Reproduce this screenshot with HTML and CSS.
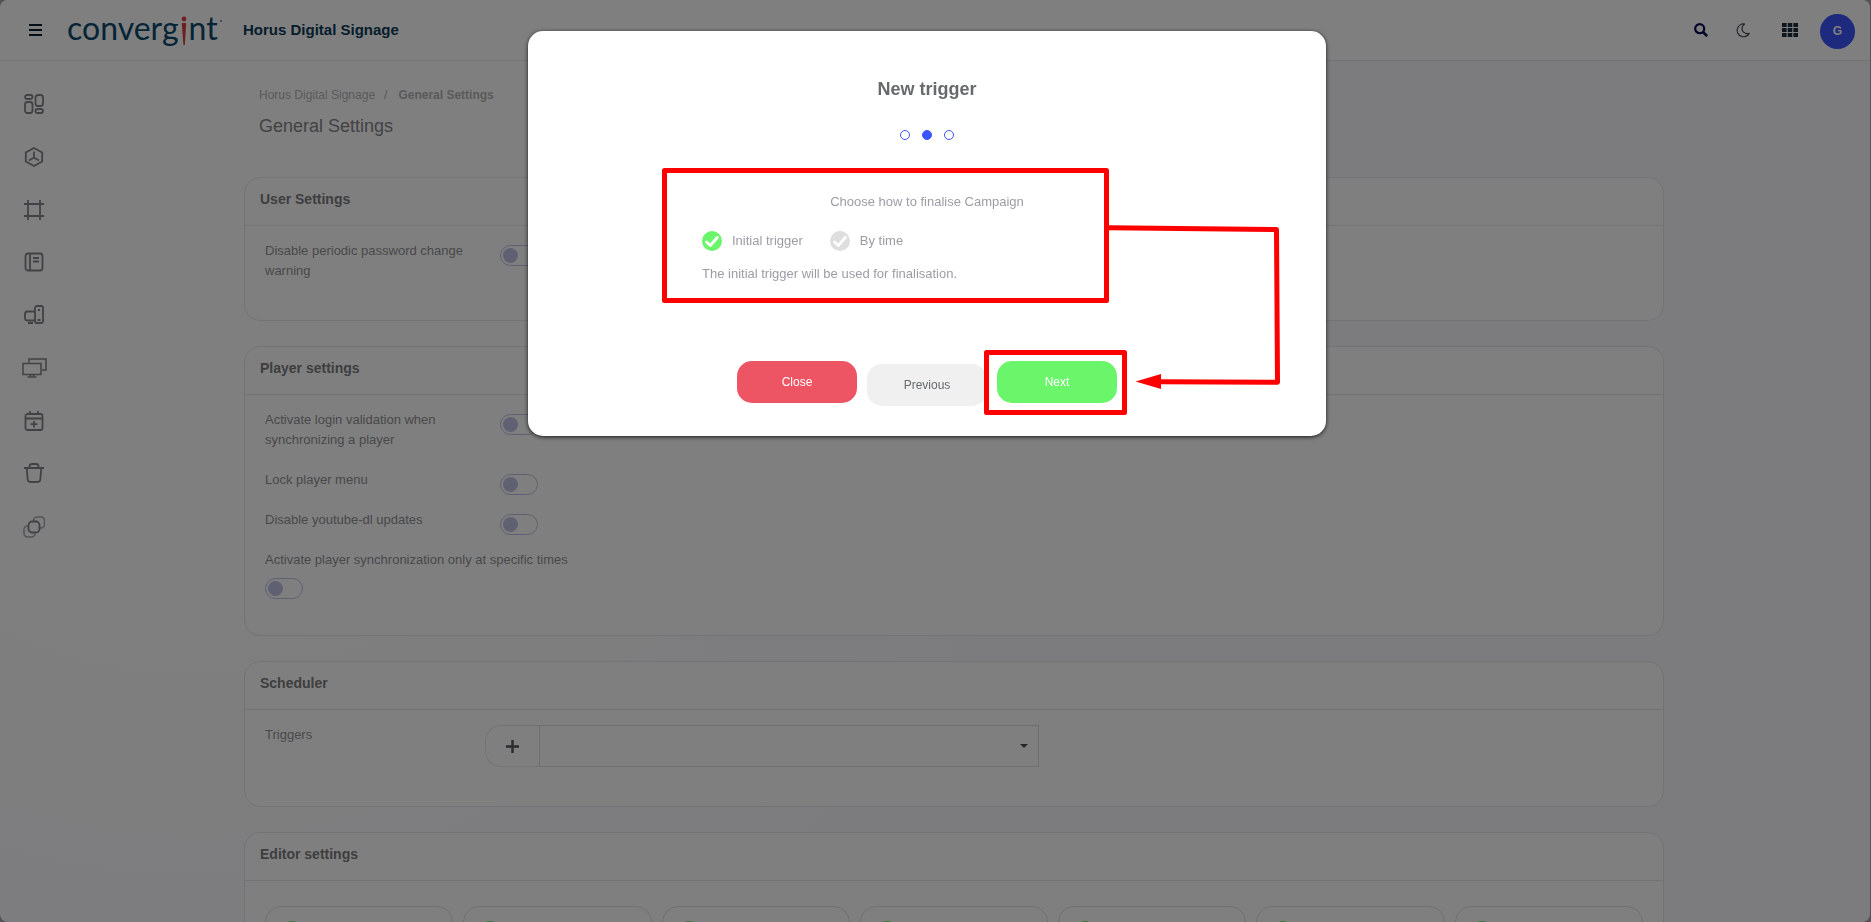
FILE: index.html
```html
<!DOCTYPE html>
<html lang="en">
<head>
<meta charset="utf-8">
<title>General Settings</title>
<link rel="stylesheet" href="styles.css">
</head>
<body>
<div class="app">
  <header class="topbar">
    <button class="icon-btn menu-btn" aria-label="Menu"><svg width="13" height="12" viewBox="0 0 13 12"><path d="M0 1h13M0 6h13M0 11h13" stroke="#0c1c2c" stroke-width="2"/></svg></button>
    <a class="brand" href="#"><span>converg</span><svg class="brand-i" width="6" height="30" viewBox="0 0 6 30"><circle cx="3" cy="3" r="2.4" fill="#e0403c"/><path d="M.8 7h4.400L3.800 29H2.400z" fill="#d93f3c"/></svg><span>nt</span><i class="brand-mark"></i></a>
    <span class="app-name">Horus Digital Signage</span>
    <div class="tools">
      <button class="icon-btn" aria-label="Search"><svg width="14" height="14" viewBox="0 0 14 14" fill="none" stroke="#080850"><circle cx="5.700" cy="5.700" r="4.500" stroke-width="2.200"/><path d="M9 9l4.200 4.200" stroke-width="2.600"/></svg></button>
      <button class="icon-btn" aria-label="Dark mode"><svg width="14" height="15" viewBox="0 0 14 15" fill="none" stroke="#45464e" stroke-width="1.200" stroke-linejoin="round"><path d="M8.600 1A6.400 6.400 0 1 0 13.200 10.400C9 11.400 5.400 8.600 6.100 4.600 6.400 3 7.300 1.800 8.600 1z"/></svg></button>
      <button class="icon-btn" aria-label="Apps"><svg width="16" height="14" viewBox="0 0 16 14" fill="#1b2c3a"><path d="M0 0h4.600v4H0zM5.700 0h4.600v4H5.700zM11.400 0H16v4h-4.600zM0 5h4.600v4H0zM5.700 5h4.600v4H5.700zM11.400 5H16v4h-4.600zM0 10h4.600v4H0zM5.700 10h4.600v4H5.700zM11.400 10H16v4h-4.600z"/></svg></button>
      <button class="avatar">G</button>
    </div>
  </header>

  <div class="layout">
    <nav class="sidebar" aria-label="Main">
      <a href="#" aria-label="Dashboard"><svg viewBox="0 0 20 20"><rect x="1" y="1" width="7.500" height="4" rx="2"/><rect x="1" y="8" width="7.500" height="11" rx="2.500"/><rect x="11.500" y="1" width="7.500" height="11" rx="2.500"/><rect x="11.500" y="15" width="7.500" height="4" rx="2"/></svg></a>
      <a href="#" aria-label="Packages"><svg viewBox="0 0 20 20"><path d="M10 1l8.200 4.500v9L10 19l-8.200-4.500v-9zM10 4.500V10.500M10 10.500l5 3M10 10.500l-5 3"/></svg></a>
      <a href="#" aria-label="Frames"><svg viewBox="0 0 20 20"><path d="M4 0v20M16 0v20M0 4h20M0 16h20"/></svg></a>
      <a href="#" aria-label="Library"><svg viewBox="0 0 20 20"><rect x="1.500" y="1.500" width="17" height="17" rx="2.500"/><path d="M6 1.500v17M9 6h6M9 9.500h6"/></svg></a>
      <a href="#" aria-label="Devices"><svg viewBox="0 0 20 20"><rect x="11" y="1" width="8" height="17" rx="2"/><path d="M11 6.500H3.500Q1 6.500 1 9v4q0 2.500 2.500 2.500H11M4 18h5M14 5h2M13.500 15h3"/></svg></a>
      <a href="#" aria-label="Screens"><svg class="wide" viewBox="0 0 25 20"><path d="M1 5.500h18v11H1zM7 4.500V1h17v11h-4M5.500 19h9M8.500 17v2M11.500 17v2"/></svg></a>
      <a href="#" aria-label="Calendar"><svg viewBox="0 0 20 20"><rect x="1.500" y="3" width="17" height="16" rx="2"/><path d="M1.500 7.500h17M6 0v3M14 0v3M10 10v6.500M6.500 13.200h7"/></svg></a>
      <a href="#" aria-label="Trash"><svg viewBox="0 0 20 20"><path d="M0 5h20M2.700 5l1 11.500Q4 19 6.500 19h7q2.500 0 2.800-2.500L17.300 5M5.500 5V3.500Q5.500 1 8 1h4q2.500 0 2.500 2.500V5"/></svg></a>
      <a href="#" aria-label="Layers"><svg class="stack" viewBox="0 0 22 22"><rect class="faint" x="1" y="10" width="11" height="11" rx="3.500"/><rect class="faint" x="10.500" y="1" width="11" height="11" rx="3.500"/><rect class="front" x="5.500" y="5.500" width="11" height="11" rx="3.500"/></svg></a>
    </nav>

    <main class="content">
      <div class="crumbs"><a href="#">Horus Digital Signage</a><span>/</span><b>General Settings</b></div>
      <h1>General Settings</h1>

      <section class="card">
        <h2>User Settings</h2>
        <div class="body">
          <div class="row"><label for="pw">Disable periodic password change warning</label><input class="toggle" type="checkbox" id="pw"></div>
        </div>
      </section>

      <section class="card">
        <h2>Player settings</h2>
        <div class="body">
          <div class="row"><label for="lv">Activate login validation when synchronizing a player</label><input class="toggle" type="checkbox" id="lv"></div>
          <div class="row"><label for="lk">Lock player menu</label><input class="toggle" type="checkbox" id="lk"></div>
          <div class="row"><label for="yt">Disable youtube-dl updates</label><input class="toggle" type="checkbox" id="yt"></div>
          <div class="row stacked"><label for="sy">Activate player synchronization only at specific times</label><input class="toggle" type="checkbox" id="sy"></div>
        </div>
      </section>

      <section class="card">
        <h2>Scheduler</h2>
        <div class="body">
          <div class="field">
            <label for="trg">Triggers</label>
            <button class="add" aria-label="Add trigger"><svg width="13" height="13" viewBox="0 0 13 13"><path d="M6.500 0v13M0 6.500h13" stroke="#55565a" stroke-width="2.400"/></svg></button>
            <div class="picker"><select id="trg"></select><svg class="caret" width="8" height="4" viewBox="0 0 8 4"><path d="M0 0h8L4 4z" fill="#4a4a4e"/></svg></div>
          </div>
        </div>
      </section>

      <section class="card">
        <h2>Editor settings</h2>
        <div class="tiles">
          <div class="tile"><input class="check" type="checkbox" checked aria-label="Option 1"></div>
          <div class="tile"><input class="check" type="checkbox" checked aria-label="Option 2"></div>
          <div class="tile"><input class="check" type="checkbox" checked aria-label="Option 3"></div>
          <div class="tile"><input class="check" type="checkbox" checked aria-label="Option 4"></div>
          <div class="tile"><input class="check" type="checkbox" checked aria-label="Option 5"></div>
          <div class="tile"><input class="check" type="checkbox" checked aria-label="Option 6"></div>
          <div class="tile"><input class="check" type="checkbox" checked aria-label="Option 7"></div>
        </div>
      </section>
    </main>
  </div>
</div>

<div class="backdrop">
  <div class="modal" role="dialog" aria-labelledby="dlg">
    <h3 id="dlg">New trigger</h3>
    <div class="steps"><i></i><i class="on"></i><i></i></div>
    <p class="prompt">Choose how to finalise Campaign</p>
    <div class="options">
      <div class="choices">
        <label class="choice"><span class="tick"><input type="radio" name="fin" checked><svg viewBox="0 0 20 20"><path d="M4.500 11l3.800 3.500 7-8"/></svg></span>Initial trigger</label>
        <label class="choice"><span class="tick"><input type="radio" name="fin"><svg viewBox="0 0 20 20"><path d="M4.500 11l3.800 3.500 7-8"/></svg></span>By time</label>
      </div>
      <p>The initial trigger will be used for finalisation.</p>
    </div>
    <div class="actions">
      <button class="btn close">Close</button>
      <button class="btn prev">Previous</button>
      <button class="btn next">Next</button>
    </div>
    <svg class="notes" width="798" height="405" viewBox="528 31 798 405" fill="none" stroke="#f00" stroke-width="5" stroke-linejoin="round">
      <rect x="664.500" y="170.500" width="442" height="130"/>
      <rect x="986.500" y="352.500" width="138" height="60"/>
      <path d="M1109 227.800L1276.500 229.600 1277.500 382.300 1160 381.700"/>
      <path d="M1135.500 381.500L1161 374v15z" fill="#f00" stroke="none"/>
    </svg>
  </div>
</div>
</body>
</html>
```
FILE: styles.css
```css
* { box-sizing: border-box; }
body { margin: 0; height: 100vh; overflow: hidden; background: #a8a9b0; font: 13px/20px "Liberation Sans", Arial, sans-serif; color: #929296; }
h1, h2, h3, p { margin: 0; }
a { color: inherit; text-decoration: none; }
button, input, select { font: inherit; margin: 0; }
svg { display: block; }

.app { height: 100vh; margin-right: 1px; border-radius: 8px; overflow: hidden; background: radial-gradient(circle at 200px 200px, #fff 0, #fff 300px, #f9f9fd 900px); }
.topbar { display: flex; align-items: center; height: 61px; padding: 0 15px 0 29px; background: #fff; border-bottom: 1px solid #e4e4ea; }
.icon-btn { padding: 0; border: 0; background: none; }
.brand { display: flex; align-items: center; width: 156px; margin-left: 25px; font: 32px/40px Lato, sans-serif; color: #0b4a6e; }
.brand span { padding-bottom: 4px; }
.brand-i { margin: 1px 2px 0; }
.brand-mark { width: 2px; height: 2px; margin: 0 0 18px 2px; border-radius: 1px; background: #5a86a0; }
.app-name { margin-left: 20px; font-size: 15px; font-weight: bold; color: #0b3a58; }
.tools { display: flex; align-items: center; margin-left: auto; }
.tools .icon-btn { margin-right: 28px; }
.tools .icon-btn:nth-child(2) { margin-right: 32px; }
.tools .icon-btn:nth-child(3) { margin-right: 22px; }
.avatar { width: 35px; height: 35px; margin-top: 2px; padding: 0; border: 0; border-radius: 50%; background: #3a55fb; color: #fff; font-size: 12px; font-weight: bold; }

.layout { display: flex; }
.sidebar { display: flex; flex-direction: column; justify-content: space-between; align-items: center; width: 68px; height: 444px; margin-top: 33px; flex: none; }
.sidebar svg { width: 20px; height: 20px; fill: none; stroke: #848488; stroke-width: 1.8; }
.sidebar .wide { width: 25px; stroke-width: 1.5; }
.sidebar .stack { width: 22px; height: 22px; }
.sidebar .faint { stroke: #a8a8ac; stroke-width: 1.5; }
.sidebar .front { fill: #fff; }

.content { flex: 1; padding: 24px 206px 0 176px; }
.crumbs { display: flex; gap: 9px; padding-left: 15px; font-size: 12px; color: #b4b4b8; }
.crumbs b { margin-left: 2px; }
h1 { margin: 10px 0 40px; padding-left: 15px; font-size: 18px; line-height: 22px; font-weight: normal; color: #85858a; }

.card { margin-bottom: 25px; border: 1px solid #e6e6ec; border-radius: 16px; background: #fff; }
.card h2 { height: 48px; padding: 11px 15px 0; border-bottom: 1px solid #e6e6ec; font-size: 14px; line-height: 20px; color: #7c7c80; }
.body { display: flex; flex-direction: column; gap: 20px; padding: 15px 20px 39px; }
.row { display: flex; align-items: flex-start; height: 20px; }
.row:first-child { height: 40px; }
.row label { width: 210px; margin-right: 25px; }
.row .toggle { margin-top: 4px; }
.stacked { flex-direction: column; height: 46px; }
.stacked label { width: auto; margin: 0; }
.toggle { appearance: none; display: block; width: 38px; height: 21px; padding: 2px; border: 1px solid #bcc0e4; border-radius: 11px; }
.row.stacked .toggle { margin-top: 8px; }
.toggle::before { content: ""; display: block; width: 15px; height: 15px; border-radius: 50%; background: #bfc1e4; }

.field { display: flex; align-items: flex-start; }
.field label { width: 220px; }
.add { display: grid; place-items: center; width: 54px; height: 42px; border: 1px solid #e6e6ec; border-right: 0; border-radius: 16px 0 0 16px; background: none; }
.picker { position: relative; width: 500px; }
.picker select { appearance: none; display: block; width: 100%; height: 42px; border: 1px solid #dedee4; border-radius: 0; background: none; }
.caret { position: absolute; right: 11px; top: 19px; }

.tiles { display: grid; grid-template-columns: repeat(7, 1fr); gap: 10px; padding: 25px 20px; }
.tile { height: 80px; padding: 14px 16px; border: 1px solid #e0e0e6; border-radius: 16px; }
.check { appearance: none; display: block; width: 20px; height: 20px; border-radius: 50%; background: #6af56a; }

.backdrop { position: fixed; inset: 0; display: flex; justify-content: center; align-items: flex-start; padding: 31px 17px 0 0; background: rgba(0, 0, 0, .5); }
.modal { position: relative; width: 798px; padding: 46px 0 30px; border-radius: 15px; background: #fff; box-shadow: 0 1px 4px rgba(0, 0, 0, .8); text-align: center; color: #9c9ca6; }
.modal h3 { font-size: 18px; line-height: 24px; color: #676a6c; }
.steps { display: flex; justify-content: center; gap: 12px; margin-top: 29px; }
.steps i { width: 10px; height: 10px; border: 1px solid #3a55fb; border-radius: 50%; }
.steps .on { background: #3a55fb; }
.prompt { margin-top: 52px; }
.options { width: 450px; margin: 19px auto 0; text-align: left; }
.choices { display: flex; gap: 27px; margin-bottom: 13px; }
.choice { display: flex; gap: 10px; }
.tick { position: relative; width: 20px; height: 20px; }
.tick input { appearance: none; display: block; width: 20px; height: 20px; border-radius: 50%; background: #dedede; }
.tick input:checked { background: #6af56a; }
.tick svg { position: absolute; inset: 0; fill: none; stroke: #fff; stroke-width: 3; stroke-linecap: round; stroke-linejoin: round; }
.actions { display: flex; justify-content: center; gap: 10px; margin-top: 77px; }
.btn { width: 120px; height: 42px; padding: 0; border: 0; border-radius: 15px; color: #fff; font-size: 12px; }
.close { background: #ed5565; }
.prev { margin-top: 3px; background: #f0f0f0; color: #676a6c; }
.next { background: #6af56a; }
.notes { position: absolute; left: 0; top: 0; pointer-events: none; }
```
